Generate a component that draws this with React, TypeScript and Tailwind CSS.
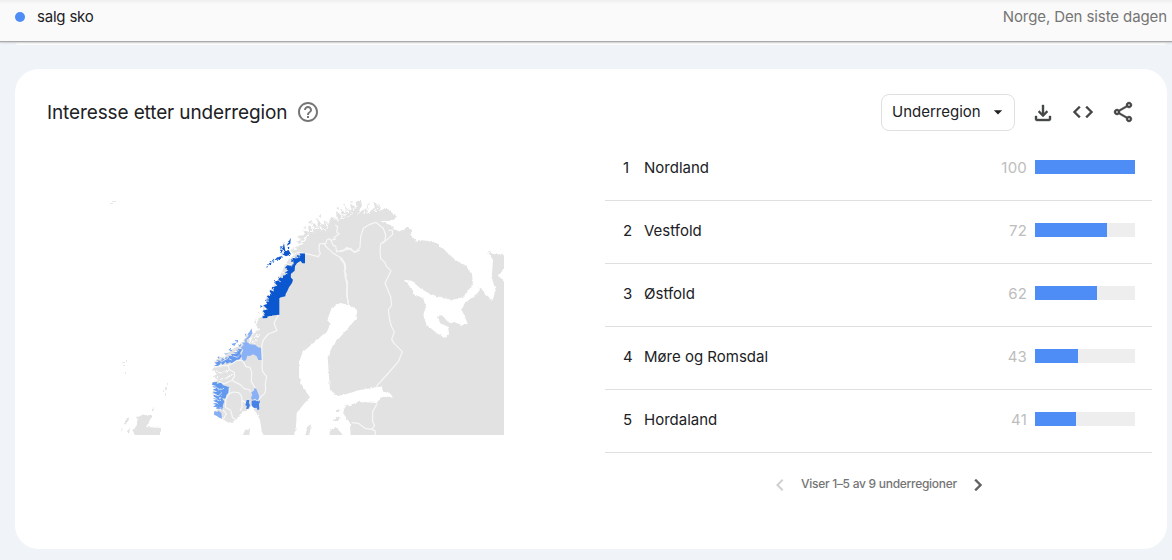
import { MdArrowDropDown, MdChevronLeft, MdChevronRight, MdCode, MdHelpOutline, MdOutlineFileDownload, MdOutlineShare } from "react-icons/md";

const rows = [
  { name: "Nordland", value: 100 },
  { name: "Vestfold", value: 72 },
  { name: "Østfold", value: 62 },
  { name: "Møre og Romsdal", value: 43 },
  { name: "Hordaland", value: 41 },
];

const mainland =
  "M228 422.7 221.7 418 214 413 217 410 215 405 218 400 212 393 216 388 212 382.7 218 380 212.7 376.7 217 374 211.7 369 218 366 215 361 219 357 225 356.7 229 351 233 349 241.7 343.3 246 336 251.7 329 252 335 256 331 260 330 256 325 259 318 261.7 316.7 262 307 267 303 266 297 271 292 271 288 277.7 281 282.7 270 285 265 289 259 294 255 290 250 297 251 296 246 301 245 296.7 241.7 302 240 298 236 305 235 303 230 309 232 308 226 314 228 311.7 221 318 227 317 218 322 225 325 220 329 224 330 217 336.7 218 336 211 342 216 340 209 346 213 345 206 352 211 350 204 358 208 355 202 361 200 362 206 357 214 366 208 370 202 367 214 375 207 373 201.7 380 205 379 211 386.7 208 391 212 397 216.7 390 220.7 380 221 390 225 396 230 401 232 404 230 406.7 226 412.7 230.7 410 234 417 242 420 240 428 241 436.7 243 446.7 251.7 455 260 465 265 471.7 273 473 283 466.7 293 463 297 456.7 299 450 299.5 443 298 430 294 420 288 411.7 280.7 405 280 409 286 411.7 288 413 294 423 298 426 306.7 423 315 426.7 325 436.7 333 445 337.7 449 333 448 326.7 440 323 438 316.7 441.7 315 448 321.7 454 322 461.7 325 467.7 324 465 316.7 461.7 310 465 303 478 292.7 480 286.7 485 294 492.7 300 495.7 290 491.7 278 493 260 487.7 251 493 254 510 256 510 266 504 268 498 275 504 281.7 510 286 510 440 350.7 440 350 423 343 413 345 406.7 360 401.7 376.7 403 381 397 392.7 396.7 390 393 383 391.7 381.7 386 373 388 360 390 346.7 394 338 396 330 390 329 376.7 327.7 356.7 333 345 345 331.7 356.7 318 357 310 350 305 340 303 331.7 308 327 320 330 323 328 330 315 341.7 303 351.7 299 361.7 299 376.7 303 388 310 397 303 405 296.7 413 296 426.7 293 440 263 440 260 420 255 410 253 404 248 410 241.7 413 237 418 233 421.7Z";

function RegionMap() {
  return (
    <svg viewBox="100 190 404 245" className="h-[245px] w-[404px]">
      <defs>
        <filter id="coast" x="-2%" y="-2%" width="104%" height="104%">
          <feTurbulence type="fractalNoise" baseFrequency="0.28" numOctaves="2" seed="4" result="n" />
          <feDisplacementMap in="SourceGraphic" in2="n" scale="3" xChannelSelector="R" yChannelSelector="G" />
        </filter>
        <filter id="fjord" x="-10%" y="-10%" width="120%" height="120%">
          <feTurbulence type="fractalNoise" baseFrequency="0.3" numOctaves="2" seed="7" result="n" />
          <feDisplacementMap in="SourceGraphic" in2="n" scale="8" xChannelSelector="R" yChannelSelector="G" />
        </filter>
      </defs>
      <g fill="#e2e2e2" filter="url(#coast)">
        <path d={mainland} />
        <path d="M137 440 133 431 135 428 138 422 137 417 145 415 152 415 150 420 146 427 161 428 160 440Z" />
        <path d="M124 422 129 417 129 420 125 425ZM121 430 123 427 122 432ZM127 431 130 428 129 434ZM151 410 154 407 153 412Z" />
        <path d="M241 440 245 430 250 428 249 440ZM304 440 307 427 311 424 309 440ZM333 421 337 416 341 418 337 421ZM335 412 339 409 340 412ZM329 440 330 430 336 427 342 434 343 440Z" />
      </g>
      <g fill="#e8e8e8">
        <path d="M122 362h3v1h-3zM126 360h1v2h-1zM123 365h2v1h-2zM125 372h1v2h-1zM167 383h1v2h-1zM165 387h2v3h-2zM163 390h1v2h-1zM165 393h1v3h-1zM112 201h4v1h-4zM110 203h3v1h-3z" />
      </g>
      <g fill="none" stroke="#fff" strokeWidth="1.1" filter="url(#fjord)">
        <path d="M297 246 303 241 308 236M305 239 311 231M311 231 318 226 325 231M321 225 328 220 327 229M333 216 339 221 346 213M345 212 351 208M350 217 357 205M364 213 369 204M375 211 378 205M296 253 289 257M213 371 222 373 229 370M213 378 223 379 231 376M214 365 221 366M216 411 223 406M214 390 221 393 225 389" />
        <path d="M247 343 253 337 259 335M252 343 257 340M236 352 241 349" />
      </g>
      <g fill="#e6e6e6" filter="url(#coast)">
        <path d="M291 250 294 248 295 251 292 252ZM297 237 300 235 300 239ZM303 228 306 226 306 229ZM308 222 312 220 312 223ZM318 216 321 215 321 218ZM336 208 339 207 339 210ZM342 205 345 204 345 207ZM350 202 353 201 352 204ZM258 313 260 311 260 314ZM254 322 256 320 256 324ZM229 355 232 354 231 357Z" />
      </g>
      <g transform="translate(200 190) scale(.33333)">
        <path filter="url(#fjord)" fill="#0b57d0" d="M272 143 271 161 260 167ZM252 160 256 183 246 177ZM244 175 237 189 250 185ZM255 183 266 180 273 193 258 199 247 193ZM248 198 232 202 223 211 240 208ZM220 206 224 213 213 218ZM211 215 215 223 204 226ZM204 227 201 234 199 230ZM181 346 188 349 181 353ZM243 168 239 172 244 173ZM262 172 268 170 267 176Z" />
        <path filter="url(#fjord)" fill="#0b57d0" d="M276 206 273 216 282 214 280 228 262 226 255 233 265 243 254 247 258 255 247 258 250 265 238 262 235 270 222 276 232 287 218 292 226 300 207 300 215 314 200 318 208 328 194 330 202 342 190 346 202 358 188 362 198 376 188 383 224 374 235 330 250 310 265 270 276 240 295 214 304 196Z" />
        <path fill="#0b57d0" d="M315 188V220L307 220 302 213 292 218 285 227 284 242 272 252 273 263 279 269 276 279 267 292 262 303 257 312 256 319 238 323V374L202 378 202 384 188 385 188 379 195 378 191 374 198 369 190 364 201 363 197 352 205 350 200 344 203 341 202 331 209 332 209 319 222 317 213 312 213 307 223 303 218 299 229 297 226 289 233 287 232 280 240 276 240 271 249 269 250 264 258 262 254 257 262 252 260 245 267 249 269 240 272 236 275 227 282 222 280 213 285 203 291 208 287 200 293 201 290 195 303 198 298 190Z" />
        <path stroke="#fff" strokeWidth="2.6" fill="none" d="M271 200 287 204 299 201M262 222 274 225M246 246 262 251M228 268 242 275M206 298 222 303M190 330 207 334M185 352 203 358" strokeDasharray="6 2 9 1" />
      </g>
      <g transform="translate(200 310) scale(.33333)">
        <path fill="#6699ee" d="M42 168 51 163 43 158 56 155 50 150 64 153 66 144 75 150 77 142 88 143 85 137 97 138 93 132 108 132 100 126 114 127 107 120 118 124 112 116 127 118 120 129 126 138 117 149 105 155 93 162 92 156 80 161 77 155 68 165 62 158 57 168Z" />
        <path fill="#8ab1f5" d="M155 57 157 69 149 83 139 90 141 96 150 103 165 104 174 112 185 114 186 150 175 150 170 139 160 133 149 138 142 137 138 151 129 153 126 148 125 131 130 119 122 113 131 105 127 98 137 97 133 91 146 77 143 73Z" />
        <path filter="url(#fjord)" fill="#78a6f2" d="M104 90 117 90 111 99ZM92 102 109 98 103 108ZM115 102 125 104 119 111ZM85 118 96 116 92 124ZM52 142 58 139 57 146ZM74 131 82 130 78 135ZM134 74 139 70 138 78Z" />
        <path fill="#6299ef" d="M38 217 52 216 50 222 66 216 68 225 88 232 87 247 79 255 77 266 66 265 73 274 68 288 70 294 58 291 60 297 47 295 54 290 39 291 48 284 38 281 52 278 39 272 48 270 38 264 54 266 42 260 40 255 52 256 42 249 38 245 53 246 38 238 49 236 36 229 51 229 36 224Z" />
        <path fill="#85aef5" d="M43 303 52 306 56 302 64 309 66 326 58 323 49 317 42 314ZM55 292 67 292 68 301 61 296Z" />
        <path fill="#8ab1f5" d="M163 232 169 237 173 247 177 257 178 268 170 271 166 266 156 270 153 263 157 255 154 247 162 242Z" />
        <path fill="#4682e5" d="M155 272 166 271 170 274 180 269 180 275 177 282 178 298 173 301 170 293 162 294 155 287Z" />
        <path fill="#3f7ee3" d="M140 270 148 270 147 279 150 286 145 297 138 296 141 288 136 286Z" />
        <g fill="none" stroke="#fff" strokeWidth="2" filter="url(#fjord)">
          <path d="M43 230 61 239 72 235M42 253 56 258 67 246M44 266 57 272 65 257M47 278 57 282M61 157 83 145 95 150M97 137 112 142 121 133M101 123 109 131" />
        </g>
      </g>
      <g fill="none" stroke="#f7f7f7" strokeWidth="3.6" strokeLinejoin="round">
        <g transform="translate(200 190) scale(.33333)">
          <path d="M315 190 355 200 361 190 357 180 358 162 372 160 378 160 380 150 388 146 394 153 399 166 407 169 410 185 430 180 438 180 452 175 463 187 480 180M372 160 378 170 400 190 425 205 435 220 437 235 432 245 439 252 437 265 442 290 441 310 445 345M393 150 406 148 402 143 417 131 410 126 413 110 406 105M290 188 315 189" />
        </g>
        <g transform="translate(340 190) scale(.33333)">
          <path d="M0 185 10 183 20 172 45 187 60 172 62 140 70 115 90 103 107 97 130 115 137 135 135 152 122 161 120 183 122 205 135 218 140 230 153 242 135 280 152 320 155 345 145 360 150 395 155 410 163 425 155 448 163 461 187 485 175 515 140 555 108 590M128 160 145 145 158 133 157 120 145 122M0 205 13 222 15 240 15 260 22 275 20 315 25 340M112 640 98 665 98 695 104 706 95 718 75 715 55 700 35 698M95 718 105 722 107 740" />
        </g>
        <g transform="translate(200 310) scale(.33333)">
          <path d="M235 15 227 30 222 40 231 62 205 72 190 90 185 108 187 150 186 173 188 185 200 200 196 222 197 238 194 250 179 264 176 274M45 172 64 166 83 167 98 160 112 151 127 151 138 170 149 172 155 185 154 215 162 228 166 235M85 167 88 179 103 187 104 199 97 208 102 215 120 223 133 236 150 240 151 248M57 214 72 222 98 210M88 233 87 252 78 266 76 292M87 252 99 246 116 248 124 257 126 270 137 279M76 292 92 301 98 324 108 328M68 299 79 311 70 328M126 270 126 292 120 302" />
        </g>
      </g>
    </svg>
  );
}

export default function App() {
  return (
    <div className="flex h-[560px] w-[1172px] flex-col overflow-hidden bg-[#f0f4f9] font-['Inter','Liberation_Sans',sans-serif] text-[15px] text-[#202124]">
      <header className="z-10 flex h-[41px] shrink-0 items-start justify-between bg-[#fafafa] bg-linear-to-b from-[#eeeeee] to-[#fafafa] to-10% pr-[5px] pl-[15px] shadow-[0_1px_1px_#a9a9ad,0_2px_2px_#d2d2d5]">
        <div className="flex h-[34px] items-center">
          <span className="size-[10px] rounded-full bg-[#4e8df5]" />
          <span className="ml-3 tracking-[-0.2px]">salg sko</span>
        </div>
        <span className="flex h-[34px] items-center tracking-[-0.1px] text-[#757575]">Norge, Den siste dagen</span>
      </header>
      <div className="mx-[15px] h-1 w-[1152px] shrink-0 rounded-b-[24px] bg-white" />
      <main className="mt-6 ml-[15px] flex h-[480px] w-[1152px] shrink-0 flex-col rounded-[24px] bg-white">
        <div className="flex h-[69px] items-start justify-between pt-[25px] pr-8 pl-8">
          <div className="flex h-9 items-center">
            <h1 className="w-[240px] pt-[2px] text-[19px] tracking-[-0.12px] whitespace-nowrap">Interesse etter underregion</h1>
            <MdHelpOutline className="ml-[9px] size-6 text-[#757575]" />
          </div>
          <div className="flex h-[37px] items-center text-[#444746]">
            <button className="flex h-[37px] w-[134px] items-center justify-between rounded-lg border border-[#e0e0e0] pr-[6px] pl-[10px] text-[#202124]">
              <span>Underregion</span>
              <MdArrowDropDown className="mb-px size-5" />
            </button>
            <MdOutlineFileDownload className="ml-4 size-6 [stroke-width:0.4] [&>path[fill=none]]:stroke-none" />
            <MdCode className="mb-[2px] ml-4 size-6 [stroke-width:0.4] [&>path[fill=none]]:stroke-none" />
            <MdOutlineShare className="mb-[2px] ml-4 size-6 [stroke-width:0.4] [&>path[fill=none]]:stroke-none" />
          </div>
        </div>
        <div className="flex">
          <div className="ml-[85px] w-[404px] shrink-0 pt-[52px]">
            <RegionMap />
          </div>
          <section className="ml-[101px] flex w-[547px] flex-col">
            {rows.map((row, i) => (
              <div key={row.name} className="flex h-[63px] items-center border-b border-[#e0e0e0] pr-[17px] pl-[18px]">
                <span className="w-[21px] pb-[1px]">{i + 1}</span>
                <span className="flex-1 pb-[1px]">{row.name}</span>
                <span className="pr-2 pb-[1px] tracking-[0.2px] text-[#bdbdbd]">{row.value}</span>
                <div className="mb-[4px] h-[14px] w-[100px] bg-[#eeeeee]">
                  <div className="h-full bg-[#4e8df5]" style={{ width: `${row.value}%` }} />
                </div>
              </div>
            ))}
            <div className="mt-5 ml-[163px] flex h-6 items-center text-xs font-medium text-[#757575]">
              <MdChevronLeft className="size-6 text-[#d0d0d0]" />
              <span className="mx-[9px] w-[156px] pb-[2px] tracking-[-0.28px] whitespace-nowrap">Viser 1–5 av 9 underregioner</span>
              <MdChevronRight className="size-6 text-[#616161] [stroke-width:0.4] [&>path[fill=none]]:stroke-none" />
            </div>
          </section>
        </div>
      </main>
    </div>
  );
}
